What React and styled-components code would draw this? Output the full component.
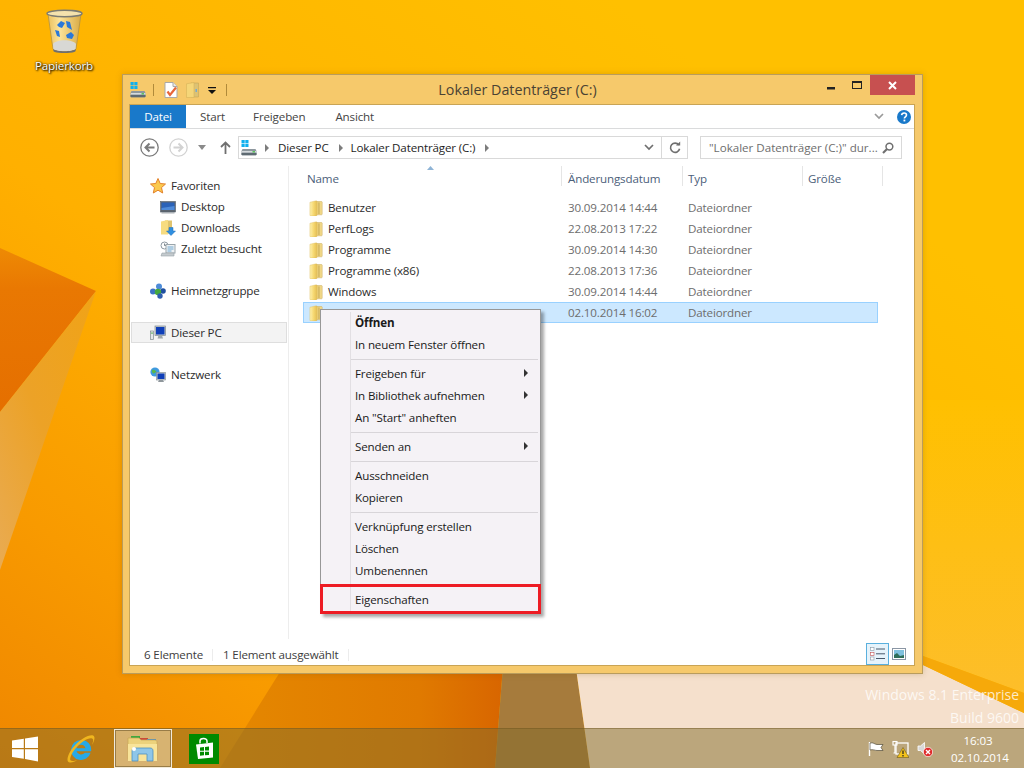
import React from "react";
import styled, { createGlobalStyle } from "styled-components";

const Global = createGlobalStyle`
  html, body { margin: 0; padding: 0; width: 1024px; height: 768px; overflow: hidden; }
  body { font-family: "Open Sans", "Noto Sans", "Liberation Sans", sans-serif; font-size: 11.6px; letter-spacing: -0.15px; color: #3a3a3a; }
  svg { display: block; flex: none; }
`;

const Desktop = styled.div`
  position: relative; width: 1024px; height: 768px; overflow: hidden; background: #ffb400;
`;
const Wallpaper = styled.svg`
  position: absolute; inset: 0;
`;
const RecycleIcon = styled.div`
  position: absolute; left: 24px; top: 9px; width: 80px; display: flex; flex-direction: column; align-items: center; gap: 5px;
`;
const IconLabel = styled.span`
  color: #fff; line-height: 16px; text-shadow: 0 0 2px #000, 1px 1px 2px #000;
`;
const Watermark = styled.div`
  position: absolute; right: 5px; top: 683px; text-align: right; color: rgba(255,255,255,.78); font-size: 14px; line-height: 23px; letter-spacing: 0;
`;

const Win = styled.div`
  position: absolute; left: 122px; top: 74px; width: 801px; height: 600px; box-sizing: border-box;
  border: 1px solid #b99c5c; background: #f6c96b; padding: 0 7px 7px 6px; display: flex; flex-direction: column;
  box-shadow: 0 0 6px rgba(120,80,0,.25);
`;
const TitleBar = styled.div`
  height: 29px; flex: none; display: flex; align-items: flex-start; position: relative;
`;
const Quick = styled.div`
  display: flex; align-items: center; height: 29px; padding-left: 1px; padding-top: 1px; box-sizing: border-box;
`;
const QuickSep = styled.span`
  width: 1px; height: 12px; background: #b08a3a; margin: 0 ${p => p.$r}px 0 ${p => p.$l}px;
`;
const Title = styled.div`
  position: absolute; left: 0; right: 0; top: 4px; text-align: center; font-size: 14.3px; line-height: 22px; color: #4a4233; letter-spacing: 0; padding-right: 9px;
`;
const Caption = styled.div`
  margin-left: auto; display: flex; align-items: flex-start; position: relative; z-index: 1;
`;
const CapBtn = styled.div`
  width: ${p => p.$w}px; height: 20px; box-sizing: border-box; display: flex; align-items: center; justify-content: center;
  background: ${p => p.$bg || "transparent"}; padding-top: ${p => p.$low || 0}px;
`;
const Client = styled.div`
  flex: 1; min-height: 0; background: #fff; border: 1px solid #c9a455; display: flex; flex-direction: column;
`;
const Tabs = styled.div`
  height: 23px; flex: none; display: flex; align-items: stretch; border-bottom: 1px solid #dadbdc; padding-right: 3px;
`;
const Tab = styled.div`
  padding: 0 14px; line-height: 24px; color: #444; margin-left: ${p => p.$gap || 0}px;
`;
const FileTab = styled.div`
  width: 56px; text-align: center; line-height: 24px; color: #fff; background: #1979ca;
`;
const TabTools = styled.div`
  margin-left: auto; display: flex; align-items: center; gap: 6px;
`;
const AddressRow = styled.div`
  height: 37px; flex: none; display: flex; align-items: center;
`;
const NavButtons = styled.div`
  width: 108px; flex: none; display: flex; align-items: center; padding-left: 10px; box-sizing: border-box; gap: 3px;
`;
const Spacer = styled.span`
  width: ${p => p.$w}px; flex: none;
`;
const AddressBox = styled.div`
  width: 450px; height: 23px; box-sizing: border-box; border: 1px solid #d9d9d9; display: flex; align-items: center; color: #1e1e1e; flex: none;
`;
const Crumb = styled.span`
  margin-right: ${p => p.$r}px; white-space: nowrap;
`;
const TriRight = styled.span`
  width: 0; height: 0; border-left: 4px solid ${p => p.$c || "#7c7c7c"}; border-top: 4px solid transparent; border-bottom: 4px solid transparent; flex: none;
`;
const AddrTools = styled.div`
  margin-left: auto; display: flex; align-items: center; height: 100%;
`;
const AddrTool = styled.div`
  height: 100%; width: ${p => p.$w}px; display: flex; align-items: center; justify-content: center; border-left: ${p => p.$line ? "1px solid #d9d9d9" : "none"};
`;
const SearchBox = styled.div`
  margin-left: 12px; width: 202px; height: 23px; box-sizing: border-box; border: 1px solid #d9d9d9; display: flex; align-items: center; justify-content: space-between; padding: 0 7px 0 8px; color: #6d6d6d; white-space: nowrap; letter-spacing: 0;
`;
const Body = styled.div`
  flex: 1; min-height: 0; display: flex;
`;
const NavPane = styled.div`
  width: 159px; flex: none; box-sizing: border-box; border-right: 1px solid #ededed; padding: 9px 0 0 1px; margin-bottom: 4px;
`;
const NavGroup = styled.div`
  margin-bottom: 21px;
`;
const NavRow = styled.div`
  height: 21px; box-sizing: border-box; width: 156px; display: flex; align-items: center; gap: 5px; color: #2b2b2b; white-space: nowrap;
  padding-left: ${p => p.$sub ? 28 : 18}px;
  border: 1px solid ${p => p.$sel ? "#dedede" : "transparent"}; background: ${p => p.$sel ? "#f3f3f3" : "transparent"};
`;
const Content = styled.div`
  flex: 1; min-width: 0; display: flex; flex-direction: column; position: relative;
`;
const HeadRow = styled.div`
  height: 20px; flex: none; display: flex; padding-left: 11px;
`;
const HeadCell = styled.div`
  width: ${p => p.$w}px; box-sizing: border-box; border-right: 1px solid #e5e5e5; padding-left: ${p => p.$p}px; line-height: 25px; color: #4c607a;
`;
const SortMark = styled.svg`
  position: absolute; left: 138px; top: 0;
`;
const Rows = styled.div`
  margin: 11px 0 0 14px; width: 575px;
`;
const FileRow = styled.div`
  height: 21px; box-sizing: border-box; display: grid; grid-template-columns: 264px 120px 1fr; align-items: center;
  border: 1px solid ${p => p.$sel ? "#99d1ff" : "transparent"}; background: ${p => p.$sel ? "#cce8ff" : "transparent"};
  color: #6d6d6d;
`;
const FileName = styled.div`
  display: flex; align-items: center; gap: 5px; padding-left: 5px; color: #2b2b2b;
`;
const Status = styled.div`
  height: 22px; flex: none; display: flex; align-items: center; padding-left: 14px; padding-right: 6px; color: #3d3d3d;
`;
const StatusText = styled.span`
  width: ${p => p.$w}px; white-space: nowrap; padding-top: 1px;
`;
const StatusSep = styled.span`
  width: 1px; height: 12px; background: #ececec; margin-right: 10px; margin-top: 2px;
`;
const ViewBtns = styled.div`
  margin-left: auto; display: flex; align-items: center;
`;
const ViewBtn = styled.div`
  width: ${p => p.$w}px; height: 22px; box-sizing: border-box; display: flex; align-items: center; justify-content: center;
  border: 1px solid ${p => p.$on ? "#5ab0de" : "transparent"}; background: ${p => p.$on ? "#e6f3fb" : "transparent"};
`;

const Menu = styled.div`
  position: absolute; left: 320px; top: 309px; width: 221px; box-sizing: border-box; padding: 2px; border: 1px solid #979797;
  background: #f5f2f6; box-shadow: 3px 3px 3px rgba(0,0,0,.35); color: #1a1a1a;
  &::before { content: ""; position: absolute; left: 29px; top: 2px; bottom: 2px; width: 1px; background: #e2dfe3; }
`;
const MenuItem = styled.div`
  height: 22px; box-sizing: border-box; padding: 0 10px 2px 32px; display: flex; align-items: center; justify-content: space-between;
  font-weight: ${p => p.$bold ? 700 : 400};
`;
const MenuSep = styled.div`
  height: 1px; margin: 3px 0 3px 28px; background: #d8d5d9;
`;
const RedBox = styled.div`
  position: absolute; left: -1px; right: -1px; bottom: -1px; height: 30px; box-sizing: border-box; border: 3px solid #ed1c24;
`;

const Taskbar = styled.div`
  position: absolute; left: 0; right: 0; bottom: 0; height: 40px; box-sizing: border-box; display: flex; align-items: center;
  background: rgba(129,107,44,.5); border-top: 1px solid rgba(110,85,30,.45); color: #fff;
`;
const TaskSlot = styled.div`
  width: ${p => p.$w}px; height: 100%; display: flex; align-items: center; justify-content: center; flex: none;
  margin-left: ${p => p.$m || 0}px;
`;
const ActiveTask = styled(TaskSlot)`
  box-sizing: border-box; background: rgba(238,222,190,.55); border: 1px solid #f2ead9; outline: 1px solid rgba(90,70,30,.5); outline-offset: -2px;
`;
const Tray = styled.div`
  margin-left: auto; display: flex; align-items: center; gap: 8px; padding-right: 19px;
`;
const Clock = styled.div`
  margin-left: 10px; width: 54px; text-align: center; line-height: 17px; padding-top: 1px;
  span { display: block; }
`;

const Folder = () => (
  <svg width="14" height="16" viewBox="0 0 14 16">
    <defs>
      <linearGradient id="fd" x1="0" y1="0" x2="1" y2="0">
        <stop offset="0" stopColor="#e6c86a" />
        <stop offset="1" stopColor="#f3dc8e" />
      </linearGradient>
      <linearGradient id="ff" x1="0" y1="0" x2="1" y2="0">
        <stop offset="0" stopColor="#fdf0b0" />
        <stop offset=".5" stopColor="#f7da74" />
        <stop offset="1" stopColor="#e5bf55" />
      </linearGradient>
    </defs>
    <path d="M6 1.500h6.500c.4 0 .7.300.7.700V14.100c0 .4-.3.700-.7.700H6z" fill="url(#fd)" stroke="#c8ab5d" strokeWidth=".5" />
    <path d="M9 2.500h1.800v11.500H9z" fill="#d7bb68" />
    <path d="M1 2.200 7.200.8c.4 0 .7.200.7.600v13.800c0 .4-.3.700-.7.700H1.600c-.4 0-.7-.3-.7-.7V2.600c0-.2 0-.4.100-.4z" fill="url(#ff)" stroke="#dcbb5e" strokeWidth=".4" />
  </svg>
);

const Drive = () => (
  <svg width="16" height="16" viewBox="0 0 16 16">
    <rect x="0.500" y="0" width="3.200" height="3.200" fill="#10b0ee" />
    <rect x="4.300" y="0" width="3.200" height="3.200" fill="#10b0ee" />
    <rect x="0.500" y="3.800" width="3.200" height="3.200" fill="#10b0ee" />
    <rect x="4.300" y="3.800" width="3.200" height="3.200" fill="#10b0ee" />
    <path d="M1.500 9h13l1 2v3.500c0 .4-.3.700-.7.700H1.200c-.4 0-.7-.3-.7-.7V11z" fill="#8d979e" />
    <path d="M1 11h14.500v1.600H.5z" fill="#d5dadd" />
    <rect x="11.500" y="11.200" width="2.500" height="1.200" fill="#3fbf3f" />
    <path d="M.5 13h15v1.500c0 .4-.3.700-.7.700H1.200c-.4 0-.7-.3-.7-.7z" fill="#5e6a72" />
  </svg>
);

const DocCheck = () => (
  <svg width="14" height="16" viewBox="0 0 14 16">
    <path d="M1 .5h8l4 4v11H1z" fill="#fff" stroke="#a9a9a9" />
    <path d="M9 .5v4h4" fill="#e9e9e9" stroke="#a9a9a9" />
    <path d="M3.500 9.500 6 13l6-7.500" fill="none" stroke="#e8663a" strokeWidth="2.200" />
  </svg>
);

const TitleFolder = () => (
  <svg width="13" height="16" viewBox="0 0 13 16">
    <path d="M5 1h7.500v14H5z" fill="#dcc274" stroke="#c7a654" strokeWidth=".6" />
    <path d="M.5 1.800 8 .5V15.500H.5z" fill="#f5d678" stroke="#d6b35a" strokeWidth=".6" />
    <path d="M9.500 7h1.500v3H9.500z" fill="#7aa9c9" />
  </svg>
);

const Back = ({ c, w }) => (
  <svg width="19" height="19" viewBox="0 0 19 19">
    <circle cx="9.500" cy="9.500" r="8.700" fill="#fff" stroke={c} strokeWidth="1.300" />
    <path d={w} fill="none" stroke={c} strokeWidth="2" />
  </svg>
);

const Up = () => (
  <svg width="11" height="13" viewBox="0 0 11 13">
    <path d="M5.500 13V2M1 6l4.500-4.500L10 6" fill="none" stroke="#6f6f6f" strokeWidth="1.800" />
  </svg>
);
const TriDown = ({ c = "#7f7f7f", w = 8 }) => (
  <svg width={w} height="5" viewBox="0 0 8 5"><path d="M0 0h8L4 5z" fill={c} /></svg>
);
const Chevron = ({ c = "#6f6f6f", w = 10 }) => (
  <svg width={w} height="7" viewBox="0 0 10 7"><path d="M1 1l4 4 4-4" fill="none" stroke={c} strokeWidth="1.700" /></svg>
);
const Refresh = () => (
  <svg width="12" height="13" viewBox="0 0 12 13">
    <path d="M9.800 4A4.600 4.600 0 1 0 10.600 7.800" fill="none" stroke="#6f6f6f" strokeWidth="1.600" />
    <path d="M7 4.600h4.200V.5z" fill="#6f6f6f" />
  </svg>
);
const Search = () => (
  <svg width="12" height="12" viewBox="0 0 12 12">
    <circle cx="7.400" cy="4.600" r="3.400" fill="none" stroke="#6f6f6f" strokeWidth="1.500" />
    <path d="M5 7 1 11" stroke="#6f6f6f" strokeWidth="2.200" />
  </svg>
);
const Help = () => (
  <svg width="14" height="14" viewBox="0 0 14 14" aria-label="Hilfe">
    <circle cx="7" cy="7" r="7" fill="#1979ca" />
    <path d="M4.600 5.200C4.800 3.800 5.800 3 7.100 3c1.400 0 2.400.8 2.400 2 0 1.800-2.100 1.800-2.100 3.500" fill="none" stroke="#fff" strokeWidth="1.600" />
    <rect x="6.500" y="9.600" width="1.800" height="1.800" fill="#fff" />
  </svg>
);

const Star = () => (
  <svg width="16" height="16" viewBox="0 0 16 16">
    <path d="M8 .5l2.200 5 5.300.5-4 3.600 1.200 5.400L8 12.200 3.300 15l1.200-5.400-4-3.600 5.300-.5z" fill="#fbc94e" stroke="#e3812a" strokeWidth="1" />
  </svg>
);
const Monitor = () => (
  <svg width="16" height="16" viewBox="0 0 16 16">
    <rect x="0.500" y="2.500" width="15" height="10.500" fill="#5c6570" stroke="#56606a" strokeWidth=".6" />
    <rect x="1.500" y="3.500" width="13" height="7.500" fill="#2a62b8" />
    <path d="M1.500 9 14.500 7v4h-13z" fill="#4e8ad8" />
    <rect x="1.500" y="13" width="13" height="1.500" fill="#aab0b6" />
  </svg>
);
const Downloads = () => (
  <svg width="16" height="17" viewBox="0 0 16 17">
    <path d="M5 1.500h7v13H5z" fill="#e0c46e" />
    <path d="M1 2.400 8 1v14.500H1z" fill="#f7dc80" />
    <path d="M9 8.500h4v3.500h2.500L11 16.500 6.500 12H9z" fill="#2f8fe0" stroke="#1d6db8" strokeWidth=".5" />
  </svg>
);
const Recent = () => (
  <svg width="16" height="16" viewBox="0 0 16 16">
    <circle cx="4.500" cy="4.500" r="3.500" fill="#fff" stroke="#8d98a0" />
    <path d="M4.500 2.500v2h1.800" fill="none" stroke="#5e6a72" strokeWidth=".8" />
    <rect x="6" y="3.500" width="9" height="8.500" fill="#eef1f3" stroke="#9aa5ab" />
    <path d="M7.500 6h6M7.500 8h6M7.500 10h4" stroke="#4e97c8" strokeWidth=".8" />
    <path d="M2 12h12v3H1z" fill="#c4cace" stroke="#98a2a8" strokeWidth=".6" />
  </svg>
);
const Homegroup = () => (
  <svg width="16" height="16" viewBox="0 0 16 16">
    <circle cx="3" cy="8.500" r="3" fill="#3d72c4" />
    <circle cx="9" cy="3.500" r="3" fill="#4d8bd8" />
    <circle cx="13" cy="8" r="2.800" fill="#1e4fa0" />
    <circle cx="8" cy="9" r="3.200" fill="#45a83c" />
    <circle cx="10" cy="13" r="2.700" fill="#2f5fb0" />
  </svg>
);
const ThisPC = () => (
  <svg width="16" height="16" viewBox="0 0 16 16">
    <rect x="0.500" y="6" width="3" height="8.500" fill="#e4e8ea" stroke="#7f8a90" strokeWidth=".7" />
    <rect x="1.200" y="7.500" width="1.600" height="1.200" fill="#4fae4f" />
    <rect x="5" y="1" width="10.500" height="9.500" fill="#c7ccd1" stroke="#7f8a90" strokeWidth=".7" />
    <rect x="6" y="2" width="8.500" height="7.500" fill="#0f3fb8" />
    <path d="M8.500 10.500h3.500l1 3H7.500z" fill="#9fa7ac" />
  </svg>
);
const Network = () => (
  <svg width="16" height="16" viewBox="0 0 16 16">
    <circle cx="5" cy="5" r="4.600" fill="#3f9ae0" />
    <path d="M2 3c2-1 3 .5 4 1s-1 2-2 2.500S1.500 5 2 3zM6 7l2.500 1-1.500 2z" fill="#58b84a" />
    <rect x="6.500" y="5.500" width="9" height="7.500" fill="#c7ccd1" stroke="#7f8a90" strokeWidth=".6" />
    <rect x="7.500" y="6.500" width="7" height="5.500" fill="#0f3fb8" />
    <path d="M9 13h4l1 2H8z" fill="#8f979c" />
  </svg>
);

const Bin = () => (
  <svg width="37" height="44" viewBox="0 0 37 44">
    <defs>
      <linearGradient id="binBody" x1="0" x2="1" y1="0" y2="0">
        <stop offset="0" stopColor="#ecc15e" />
        <stop offset=".35" stopColor="#fbe39a" />
        <stop offset="1" stopColor="#d9ab45" />
      </linearGradient>
    </defs>
    <path d="M2 5 7 40c2 3 21 3 23 0l5-35z" fill="url(#binBody)" stroke="#a88c4c" strokeWidth=".7" />
    <ellipse cx="18.500" cy="4.500" rx="17.500" ry="3.200" fill="#f4e2ad" stroke="#7b7b72" strokeWidth="1.400" />
    <path d="M7 35c3-5 20-5 23 0l-.5 5c-2.500 3-19.500 3-22 0z" fill="#d8d8d4" />
    <path d="M7 40c3 3 20 3 23 0l-.5 2.200c-3 2.500-19 2.500-22 0z" fill="#6f6f6f" />
    <path d="M11 16l4-4 4 2-3 5-3-1zM9 21l4 1 1 6-3-1zM20 26l5-3 3 3-2 4-5-1zM20 12l4 1 2 8-5-3z" fill="#2a78d8" />
  </svg>
);

const StartLogo = () => (
  <svg width="26" height="26" viewBox="0 0 26 26">
    <path d="M0 4.500 11.800 2.800V12H0zM13 2.600 26 .6V12H13zM0 13.200h11.800v9.600L0 21zM13 13.200h13V25.500L13 23z" fill="#fff" />
  </svg>
);
const IE = () => (
  <svg width="30" height="30" viewBox="0 0 30 30">
    <path d="M15 6a10 10 0 1 0 9.600 12.800h-5.800a4.800 4.800 0 0 1-8.300-1.500h14.700c.7-6.400-3.500-11.300-10.200-11.300zm-4.500 8.200a4.700 4.700 0 0 1 9 0z" fill="#27a9e6" />
    <path d="M27 1.500C23 .5 14 5 7 13.500 2.500 19 .5 25 2 27.500c1.500 2 6 .8 9.500-1.500-3 1-6 1.500-7 .3C3.500 25 5 20 9.500 14.500 15.500 7.500 22.500 3.500 26 4.500c1.700.5 1.500 3-.2 6.500 2.500-3.500 4-8.500 1.200-9.500z" fill="#f0b61e" />
  </svg>
);
const ExplorerIcon = () => (
  <svg width="32" height="30" viewBox="0 0 32 30">
    <rect x="4" y="2" width="9" height="2.500" fill="#3fa83f" />
    <rect x="11" y="4" width="10" height="2.500" fill="#c94b3a" />
    <rect x="20" y="5" width="9" height="2.500" fill="#3f8ed0" />
    <path d="M1 4h11l2 2h14c1 0 2 1 2 2v18H2c-.5 0-1-.5-1-1z" fill="#ecd27c" stroke="#c8a858" strokeWidth=".7" />
    <path d="M1 10h29v17H1z" fill="#f8e49a" />
    <path d="M5 27V17c0-2 1-3 3-3h15c2 0 3 1 3 3v10h-6v-7H11v7z" fill="#8ec6e8" stroke="#4d8fc0" strokeWidth=".8" />
    <circle cx="7" cy="15" r="2" fill="#fff" />
  </svg>
);
const Store = () => (
  <svg width="30" height="30" viewBox="0 0 30 30">
    <rect width="30" height="30" fill="#008a00" />
    <path d="M7 10.500 24 8.500V23.500L9 25z" fill="#fff" />
    <path d="M11 9.500V7c0-3 7-3.500 7 0v2" fill="none" stroke="#fff" strokeWidth="1.500" />
    <path d="M11 13.500l4-.4v3.600h-4zM16 13l4-.5v4.100h-4zM11 17.700h4v3.600l-4 .4zM16 17.700h4v3.200l-4 .4z" fill="#008a00" />
  </svg>
);
const FlagIcon = () => (
  <svg width="16" height="16" viewBox="0 0 16 16">
    <path d="M1.500 1v14" stroke="#fff" strokeWidth="1.400" />
    <path d="M2 2c3-1 5 1.500 7 1.500h6L13 6.500l2 3H9C7 9.500 5 8 2 9z" fill="#fff" stroke="#3d3524" strokeWidth=".6" />
  </svg>
);
const NetIcon = () => (
  <svg width="17" height="18" viewBox="0 0 17 18">
    <rect x="4" y="3" width="12" height="11" fill="none" stroke="#fff" strokeWidth="1.300" />
    <rect x="1" y="1.500" width="4" height="3.500" fill="none" stroke="#fff" strokeWidth="1.100" />
    <path d="M3 5v8h-1.500" fill="none" stroke="#fff" strokeWidth="1.200" />
    <path d="M11 7.500 17 17.500H5z" fill="#f4c21a" stroke="#5a4a14" strokeWidth=".5" />
    <path d="M11 10.500v3.500M11 15v1.400" stroke="#222" strokeWidth="1.200" />
  </svg>
);
const SoundIcon = () => (
  <svg width="16" height="16" viewBox="0 0 16 16">
    <path d="M1 5h2.500L7.500 1.500V13L3.500 9.500H1z" fill="#d8d8d8" stroke="#fff" strokeWidth=".8" />
    <circle cx="11" cy="11" r="4.700" fill="#e02b2b" stroke="#fff" strokeWidth=".7" />
    <path d="M9 9l4 4m0-4-4 4" stroke="#fff" strokeWidth="1.400" />
  </svg>
);
const DetailsView = () => (
  <svg width="16" height="14" viewBox="0 0 16 14">
    <rect x=".5" y=".5" width="3.500" height="3" fill="#fff" stroke="#8a96a4" strokeWidth=".6" />
    <rect x=".5" y="5.300" width="3.500" height="3" fill="#fff" stroke="#c45151" strokeWidth=".6" />
    <rect x=".5" y="10" width="3.500" height="3" fill="#fff" stroke="#8a96a4" strokeWidth=".6" />
    <path d="M6 2h9M6 6.800h9M6 11.500h9" stroke="#48586b" strokeWidth="1" />
  </svg>
);
const PreviewView = () => (
  <svg width="14" height="12" viewBox="0 0 14 12">
    <rect x=".5" y=".5" width="13" height="11" fill="#fff" stroke="#8a96a4" />
    <rect x="2" y="2" width="10" height="8" fill="#7fc1de" />
    <path d="M2 10V7l3-2 3 3 4-1v3z" fill="#2f6f5a" />
  </svg>
);

const files = [
  ["Benutzer", "30.09.2014 14:44"],
  ["PerfLogs", "22.08.2013 17:22"],
  ["Programme", "30.09.2014 14:30"],
  ["Programme (x86)", "22.08.2013 17:36"],
  ["Windows", "30.09.2014 14:44"],
  ["Temp", "02.10.2014 16:02", true],
];

export default function App() {
  return (
    <Desktop>
      <Global />
      <Wallpaper width="1024" height="768" viewBox="0 0 1024 768">
        <defs>
          <linearGradient id="base" x1="0" y1="1" x2="0.8" y2="0.2">
            <stop offset="0" stopColor="#ef8600" />
            <stop offset=".22" stopColor="#f89a00" />
            <stop offset=".5" stopColor="#ffb000" />
            <stop offset="1" stopColor="#ffc000" />
          </linearGradient>
          <linearGradient id="lit" x1="0" y1="0" x2="0" y2="1">
            <stop offset="0" stopColor="#ffc000" />
            <stop offset="1" stopColor="#fdbe2a" />
          </linearGradient>
          <linearGradient id="kite" x1="0" y1="0" x2="0" y2="1">
            <stop offset="0" stopColor="#ee8a04" />
            <stop offset=".25" stopColor="#e97802" />
            <stop offset="1" stopColor="#e56f00" />
          </linearGradient>
          <linearGradient id="beam" x1="0.9" y1="0" x2="0" y2="1">
            <stop offset="0" stopColor="#f0a318" />
            <stop offset=".5" stopColor="#eca227" />
            <stop offset="1" stopColor="#e9ab52" />
          </linearGradient>
          <linearGradient id="lower" x1="0" y1="0" x2="1" y2="0">
            <stop offset="0" stopColor="#e58800" />
            <stop offset=".7" stopColor="#e07a00" />
            <stop offset="1" stopColor="#d86500" />
          </linearGradient>
        </defs>
        <rect width="1024" height="768" fill="url(#base)" />
        <path d="M0 248 96 291 0 412z" fill="url(#kite)" />
        <path d="M96 291 0 412V570z" fill="url(#beam)" />
        <path d="M300 640H505L495 768H220z" fill="url(#lower)" />
        <path d="M505 640H572L590 768H495z" fill="#a67b3c" />
        <path d="M923 400H1024V693L923 656z" fill="url(#lit)" />
        <path d="M572 640 923 665 1024 713V768H590z" fill="#f5e0cc" />
        <path d="M923 656 1024 693V713L923 665z" fill="#f6a90a" />
      </Wallpaper>

      <RecycleIcon>
        <Bin />
        <IconLabel>Papierkorb</IconLabel>
      </RecycleIcon>
      <Watermark>
        <div>Windows 8.1 Enterprise</div>
        <div>Build 9600</div>
      </Watermark>

      <Win>
        <TitleBar>
          <Quick>
            <Drive />
            <QuickSep $l={7} $r={10} />
            <DocCheck />
            <Spacer $w={8} />
            <TitleFolder />
            <Spacer $w={9} />
            <svg width="8" height="7" viewBox="0 0 8 7"><path d="M0 0h8v1.300H0zM0 3h8L4 7z" fill="#111" /></svg>
            <QuickSep $l={10} $r={0} />
          </Quick>
          <Title>Lokaler Datenträger (C:)</Title>
          <Caption>
            <CapBtn $w={27} $low={6}>
              <svg width="8" height="3" viewBox="0 0 8 3"><rect width="8" height="2.500" fill="#222" /></svg>
            </CapBtn>
            <CapBtn $w={26}>
              <svg width="10" height="8" viewBox="0 0 10 8"><rect x=".5" y=".8" width="9" height="6.700" fill="none" stroke="#222" /><rect width="10" height="2" fill="#222" /></svg>
            </CapBtn>
            <CapBtn $w={45} $bg="#c75050">
              <svg width="9" height="9" viewBox="0 0 9 9"><path d="M1 1l7 7m0-7-7 7" stroke="#fff" strokeWidth="2" /></svg>
            </CapBtn>
          </Caption>
        </TitleBar>
        <Client>
          <Tabs>
            <FileTab>Datei</FileTab>
            <Tab>Start</Tab>
            <Tab>Freigeben</Tab>
            <Tab $gap={2}>Ansicht</Tab>
            <TabTools>
              <Chevron c="#9a9a9a" w={10} />
              <Spacer $w={1} />
              <Help />
            </TabTools>
          </Tabs>
          <AddressRow>
            <NavButtons>
              <Back c="#7a7a7a" w="M14.500 9.500H5.500M9.500 5.500l-4 4 4 4" />
              <Spacer $w={4} />
              <Back c="#d2d2d2" w="M4.500 9.500h9M9.500 5.500l4 4-4 4" />
              <Spacer $w={4} />
              <TriDown c="#8a8a8a" />
              <Spacer $w={8} />
              <Up />
            </NavButtons>
            <AddressBox>
              <Spacer $w={2} />
              <Drive />
              <Spacer $w={8} />
              <TriRight />
              <Spacer $w={9} />
              <Crumb $r={10}>Dieser PC</Crumb>
              <TriRight />
              <Spacer $w={8} />
              <Crumb $r={10}>Lokaler Datenträger (C:)</Crumb>
              <TriRight />
              <AddrTools>
                <AddrTool $w={24}><Chevron /></AddrTool>
                <AddrTool $w={25} $line><Refresh /></AddrTool>
              </AddrTools>
            </AddressBox>
            <SearchBox>
              <span>"Lokaler Datenträger (C:)" dur...</span>
              <Search />
            </SearchBox>
          </AddressRow>
          <Body>
            <NavPane>
              <NavGroup>
                <NavRow><Star />Favoriten</NavRow>
                <NavRow $sub><Monitor />Desktop</NavRow>
                <NavRow $sub><Downloads />Downloads</NavRow>
                <NavRow $sub><Recent />Zuletzt besucht</NavRow>
              </NavGroup>
              <NavGroup>
                <NavRow><Homegroup />Heimnetzgruppe</NavRow>
              </NavGroup>
              <NavGroup>
                <NavRow $sel><ThisPC />Dieser PC</NavRow>
              </NavGroup>
              <NavGroup>
                <NavRow><Network />Netzwerk</NavRow>
              </NavGroup>
            </NavPane>
            <Content>
              <HeadRow>
                <HeadCell $w={262} $p={7}>Name</HeadCell>
                <HeadCell $w={121} $p={6}>Änderungsdatum</HeadCell>
                <HeadCell $w={120} $p={5}>Typ</HeadCell>
                <HeadCell $w={80} $p={5}>Größe</HeadCell>
              </HeadRow>
              <SortMark width="7" height="4" viewBox="0 0 7 4"><path d="M3.500 0 7 4H0z" fill="#8fb4d6" /></SortMark>
              <Rows>
                {files.map(([name, date, sel]) => (
                  <FileRow key={name} $sel={sel}>
                    <FileName><Folder />{name}</FileName>
                    <span>{date}</span>
                    <span>Dateiordner</span>
                  </FileRow>
                ))}
              </Rows>
            </Content>
          </Body>
          <Status>
            <StatusText $w={68}>6 Elemente</StatusText>
            <StatusSep />
            <StatusText $w={125}>1 Element ausgewählt</StatusText>
            <StatusSep />
            <ViewBtns>
              <ViewBtn $w={23} $on><DetailsView /></ViewBtn>
              <ViewBtn $w={19}><PreviewView /></ViewBtn>
            </ViewBtns>
          </Status>
        </Client>
      </Win>

      <Menu>
        <MenuItem $bold>Öffnen</MenuItem>
        <MenuItem>In neuem Fenster öffnen</MenuItem>
        <MenuSep />
        <MenuItem>Freigeben für<TriRight $c="#333" /></MenuItem>
        <MenuItem>In Bibliothek aufnehmen<TriRight $c="#333" /></MenuItem>
        <MenuItem>An "Start" anheften</MenuItem>
        <MenuSep />
        <MenuItem>Senden an<TriRight $c="#333" /></MenuItem>
        <MenuSep />
        <MenuItem>Ausschneiden</MenuItem>
        <MenuItem>Kopieren</MenuItem>
        <MenuSep />
        <MenuItem>Verknüpfung erstellen</MenuItem>
        <MenuItem>Löschen</MenuItem>
        <MenuItem>Umbenennen</MenuItem>
        <MenuSep />
        <MenuItem>Eigenschaften</MenuItem>
        <RedBox />
      </Menu>

      <Taskbar>
        <TaskSlot $w={50}><StartLogo /></TaskSlot>
        <TaskSlot $w={62}><IE /></TaskSlot>
        <ActiveTask $w={58} $m={2}><ExplorerIcon /></ActiveTask>
        <TaskSlot $w={64}><Store /></TaskSlot>
        <Tray>
          <FlagIcon />
          <NetIcon />
          <SoundIcon />
          <Clock>
            <span>16:03</span>
            <span>02.10.2014</span>
          </Clock>
        </Tray>
      </Taskbar>
    </Desktop>
  );
}
